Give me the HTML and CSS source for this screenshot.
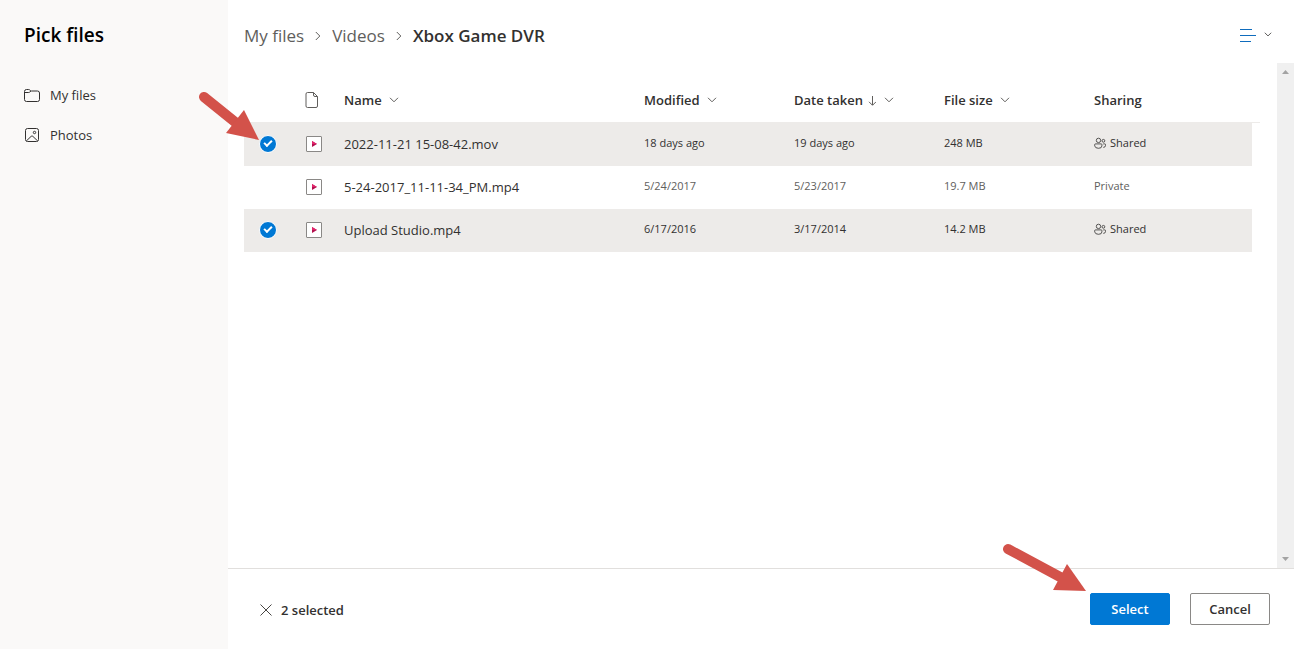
FILE: index.html
```html
<!DOCTYPE html>
<html lang="en">
<head>
    <meta charset="UTF-8">
    <meta name="viewport" content="width=device-width, initial-scale=1.0">
    <title>Pick files</title>
    <link rel="stylesheet" href="styles.css">
</head>
<body>

<!-- Shared icons -->
<svg class="sprite" width="0" height="0">
    <symbol id="chevron" viewBox="0 0 10 6"><path d="M1 .8l4 4 4-4" fill="none" stroke="currentColor"/></symbol>
    <symbol id="chevron-right" viewBox="0 0 6 10"><path d="M.8 1l4 4-4 4" fill="none" stroke="currentColor"/></symbol>
    <symbol id="video" viewBox="0 0 16 16">
        <rect x=".5" y=".5" width="15" height="15" rx=".5" fill="#fff" stroke="#8a8886"/>
        <path d="M6 5l5 3-5 3z" fill="#b4114f"/>
        <path d="M6 5l5 3H6z" fill="#e3256b"/>
    </symbol>
    <symbol id="people" viewBox="0 0 12 12">
        <g fill="none" stroke="currentColor" stroke-width=".8">
            <circle cx="4.500" cy="3.400" r="2.200"/>
            <circle cx="9.400" cy="3.800" r="1.400"/>
            <path d="M1.500 6.900h5.800q.6 0 .6.700v1.300q0 2.400-3.400 2.400T.7 8.900V7.600q0-.7.8-.7zM9.200 6.900h1.700q.6 0 .6.700v1q0 1.700-2.200 1.800"/>
        </g>
    </symbol>
</svg>

<div class="picker">
    <nav class="sidebar">
        <h1>Pick files</h1>
        <a href="#" class="nav-link">
            <svg width="16" height="16" viewBox="0 0 16 16" fill="none" stroke="currentColor"><path d="M.5 12.500v-8q0-2 2-2h2.200q.7 0 1.200.5l.5.500q.4.500 1.100.500h6q2 0 2 2v6.500q0 2-2 2h-11q-2 0-2-2zM.500 5.500h4.200q.7 0 1.200-.5l1-1"/></svg>
            My files
        </a>
        <a href="#" class="nav-link">
            <svg width="16" height="16" viewBox="0 0 16 16" fill="none" stroke="currentColor"><rect x="1.500" y="1.500" width="13" height="13" rx="2"/><circle cx="10.500" cy="5.500" r="1.200"/><path d="M2.500 13.800l4.700-4.500q.8-.7 1.600 0l4.700 4.500"/></svg>
            Photos
        </a>
    </nav>

    <main class="content">
        <header class="topbar">
            <div class="breadcrumb">
                <a href="#">My files</a>
                <svg width="6" height="10"><use href="#chevron-right"/></svg>
                <a href="#">Videos</a>
                <svg width="6" height="10"><use href="#chevron-right"/></svg>
                <strong>Xbox Game DVR</strong>
            </div>
            <button type="button" class="view-button" aria-label="View options">
                <svg width="16" height="14" viewBox="0 0 16 14" stroke="#0f6cbd"><path d="M0 1.500h12M0 7.500h16M0 13.500h11"/></svg>
                <svg width="8" height="5"><use href="#chevron"/></svg>
            </button>
        </header>

        <div class="list-area">
            <div class="list">
                <table>
                    <colgroup>
                        <col class="col-check"><col class="col-icon"><col class="col-name">
                        <col class="col-data"><col class="col-data"><col class="col-data">
                        <col><col class="col-end">
                    </colgroup>
                    <thead>
                        <tr>
                            <th></th>
                            <th class="icon-head"><svg width="14" height="16" viewBox="0 0 14 16" fill="none" stroke="#605e5c"><path d="M2.500.5h6l4 4v9.500q0 1.500-1.500 1.500H2.500Q1 15.500 1 14V2Q1 .5 2.500.500zM8.500.5V3q0 1.500 1.500 1.500h2.500"/></svg></th>
                            <th>Name <svg class="sort" width="10" height="6"><use href="#chevron"/></svg></th>
                            <th>Modified <svg class="sort" width="10" height="6"><use href="#chevron"/></svg></th>
                            <th>Date taken <svg class="order" width="8" height="10" viewBox="0 0 8 10" fill="none" stroke="#605e5c"><path d="M4.500 0v9M1 5.800l3.500 3.500L8 5.800"/></svg> <svg class="sort" width="10" height="6"><use href="#chevron"/></svg></th>
                            <th>File size <svg class="sort" width="10" height="6"><use href="#chevron"/></svg></th>
                            <th>Sharing</th>
                            <th></th>
                        </tr>
                    </thead>
                    <tbody>
                        <tr class="selected">
                            <td class="check"><input type="checkbox" aria-label="Select 2022-11-21 15-08-42.mov" checked></td>
                            <td class="file-icon"><svg width="16" height="16"><use href="#video"/></svg></td>
                            <td class="name">2022-11-21 15-08-42.mov</td>
                            <td>18 days ago</td>
                            <td>19 days ago</td>
                            <td>248 MB</td>
                            <td><svg class="people" width="12" height="12"><use href="#people"/></svg>Shared</td>
                            <td class="end"></td>
                        </tr>
                        <tr>
                            <td class="check"><input type="checkbox" aria-label="Select 5-24-2017_11-11-34_PM.mp4"></td>
                            <td class="file-icon"><svg width="16" height="16"><use href="#video"/></svg></td>
                            <td class="name">5-24-2017_11-11-34_PM.mp4</td>
                            <td>5/24/2017</td>
                            <td>5/23/2017</td>
                            <td>19.7 MB</td>
                            <td>Private</td>
                            <td class="end"></td>
                        </tr>
                        <tr class="selected">
                            <td class="check"><input type="checkbox" aria-label="Select Upload Studio.mp4" checked></td>
                            <td class="file-icon"><svg width="16" height="16"><use href="#video"/></svg></td>
                            <td class="name">Upload Studio.mp4</td>
                            <td>6/17/2016</td>
                            <td>3/17/2014</td>
                            <td>14.2 MB</td>
                            <td><svg class="people" width="12" height="12"><use href="#people"/></svg>Shared</td>
                            <td class="end"></td>
                        </tr>
                    </tbody>
                </table>
                <!-- Arrow pointing at the first checkbox -->
                <svg class="arrow arrow-check" width="64" height="52" viewBox="0 0 64 52"><path d="M8 7l36 29" stroke="#d3524a" stroke-width="10" stroke-linecap="round"/><path d="M63 50L48 20 30 43z" fill="#d3524a"/></svg>
            </div>
            <div class="scrollbar">
                <svg width="7" height="4" viewBox="0 0 7 4"><path d="M0 4l3.500-4L7 4z" fill="#a3a3a3"/></svg>
                <svg width="7" height="4" viewBox="0 0 7 4"><path d="M0 0l3.500 4L7 0z" fill="#a3a3a3"/></svg>
            </div>
        </div>

        <footer class="footer">
            <button type="button" class="clear-button">
                <svg width="12" height="12" viewBox="0 0 12 12" stroke="#484644"><path d="M.5.500l11 11M11.500.5l-11 11"/></svg>
                2 selected
            </button>
            <div class="actions">
                <button type="button" class="primary">Select</button>
                <button type="button">Cancel</button>
                <!-- Arrow pointing at Select -->
                <svg class="arrow arrow-select" width="88" height="52" viewBox="0 0 88 52"><path d="M8 8l54 29" stroke="#d3524a" stroke-width="10" stroke-linecap="round"/><path d="M86 50L67 23 53 49z" fill="#d3524a"/></svg>
            </div>
        </footer>
    </main>
</div>

</body>
</html>
```
FILE: styles.css
```css
body {
    margin: 0;
    font-family: "Open Sans", "Noto Sans", sans-serif;
    font-size: 13px;
    color: #323130;
    background-color: #fff;
}

a {
    color: inherit;
    text-decoration: none;
}

button {
    font: inherit;
    color: inherit;
    cursor: pointer;
}

.sprite {
    position: absolute;
}

.picker {
    display: flex;
    min-height: 100vh;
}

/* Sidebar */
.sidebar {
    flex: 0 0 228px;
    background-color: #faf9f8;
}

.sidebar h1 {
    margin: 0 0 20px;
    padding: 19px 24px 4px;
    font-size: 19px;
    line-height: 32px;
    font-weight: 600;
    color: #000;
}

.nav-link {
    display: flex;
    align-items: center;
    gap: 10px;
    height: 40px;
    padding: 0 24px;
}

/* Main column */
.content {
    flex: 1;
    min-width: 0;
    display: flex;
    flex-direction: column;
}

.topbar {
    display: flex;
    justify-content: space-between;
    align-items: center;
    height: 63px;
    padding: 0 22px 0 16px;
    box-sizing: border-box;
}

.breadcrumb {
    display: flex;
    align-items: center;
    gap: 11px;
    padding-bottom: 8px;
    padding-top: 16px;
    font-size: 17px;
    color: #605e5c;
}

.breadcrumb strong {
    font-weight: 600;
    color: #323130;
}

.view-button {
    display: flex;
    align-items: center;
    gap: 8px;
    padding: 6px 0 0;
    border: none;
    background: none;
}

.list-area {
    flex: 1;
    display: flex;
}

.list {
    position: relative;
    flex: 1;
    padding: 15px 17px 0 16px;
}

.scrollbar {
    display: flex;
    flex-direction: column;
    justify-content: space-between;
    align-items: center;
    width: 17px;
    padding: 7px 0;
    box-sizing: border-box;
    background-color: #f0f0f0;
}

/* File table */
table {
    width: 100%;
    table-layout: fixed;
    border-collapse: separate;
    border-spacing: 0;
}

.col-check { width: 48px; }
.col-icon { width: 52px; }
.col-name { width: 300px; }
.col-data { width: 150px; }
.col-end { width: 8px; }

th,
td {
    padding: 0;
    text-align: left;
    white-space: nowrap;
    box-sizing: border-box;
}

th {
    height: 45px;
    border-bottom: 1px solid #edebe9;
    font-weight: 600;
}

td {
    height: 43px;
    padding-bottom: 4px;
    font-size: 11px;
    color: #605e5c;
}

td.name {
    padding-bottom: 2px;
    font-size: 13px;
    color: #323130;
}

td.check,
td.file-icon {
    padding: 0 0 2px 14px;
}

th svg,
td svg {
    display: inline-block;
    vertical-align: middle;
}

.file-icon svg {
    display: block;
}

.icon-head {
    padding-left: 13px;
}

.icon-head svg {
    display: block;
}

th .sort {
    margin-left: 4px;
    vertical-align: 2px;
    color: #605e5c;
}

th .order {
    margin-left: 2px;
    vertical-align: -1px;
}

td .people {
    margin-right: 4px;
    vertical-align: -2px;
}

.selected td {
    background-color: #edebe9;
    color: #323130;
}

.selected td.end {
    background-color: transparent;
}

/* Round tick boxes, hidden until hovered */
input[type="checkbox"] {
    display: block;
    appearance: none;
    width: 18px;
    height: 18px;
    margin: 0;
    border-radius: 50%;
    opacity: 0;
}

td.check {
    padding-left: 15px;
}

tr:hover input[type="checkbox"] {
    opacity: 1;
    border: 1px solid #8a8886;
}

input[type="checkbox"]:checked,
tr:hover input[type="checkbox"]:checked {
    opacity: 1;
    border: 1px solid #fff;
    background-color: #0078d4;
}

input[type="checkbox"]:checked::after {
    content: "";
    display: block;
    width: 6px;
    height: 3px;
    margin: 4px;
    border-left: 2px solid #fff;
    border-bottom: 2px solid #fff;
    transform: rotate(-45deg);
}

/* Footer */
.footer {
    display: flex;
    justify-content: space-between;
    align-items: center;
    height: 81px;
    padding: 0 24px 0 32px;
    box-sizing: border-box;
    border-top: 1px solid #e1dfdd;
}

.clear-button {
    display: flex;
    align-items: center;
    gap: 9px;
    padding: 2px 0 0;
    border: none;
    background: none;
    font-weight: 600;
}

.actions {
    position: relative;
    display: flex;
    gap: 20px;
}

.actions button {
    width: 80px;
    height: 32px;
    padding: 0;
    border: 1px solid #8a8886;
    border-radius: 2px;
    background-color: #fff;
    font-weight: 600;
}

.actions .primary {
    border-color: #0078d4;
    background-color: #0078d4;
    color: #fff;
}

/* Arrows */
.arrow {
    position: absolute;
    fill: none;
    pointer-events: none;
}

.arrow-check {
    top: 27px;
    left: -32px;
}

.arrow-select {
    top: -52px;
    left: -90px;
}
```
